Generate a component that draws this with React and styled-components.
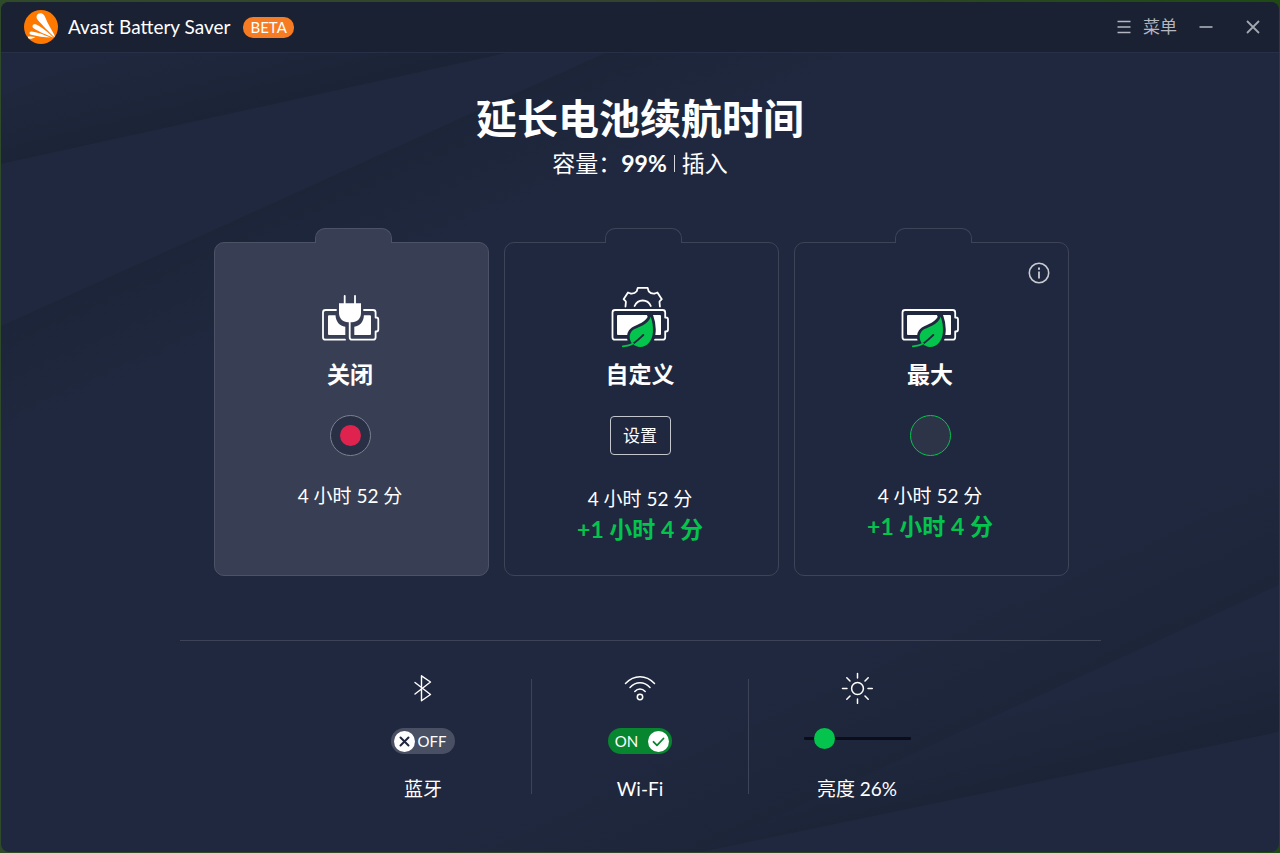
import React, { useState } from "react";
import styled, { createGlobalStyle } from "styled-components";

const color = {
  window: "#20283f",
  header: "#1a2133",
  selected: "#383f54",
  line: "#3e4458",
  green: "#04c44d",
  red: "#e0234e",
  orange: "#ff7800",
  muted: "#b4b7bf",
};

const GlobalStyle = createGlobalStyle`
  *, *::before { box-sizing: border-box; }
  body {
    margin: 0;
    background: #2c4424;
    color: #fff;
    font-family: Lato, "Noto Sans CJK SC", sans-serif;
  }
  button, input { font: inherit; color: inherit; margin: 0; }
`;

const Desktop = styled.div`
  min-height: 100vh;
  padding: 2px 1px 1px;
  display: flex;
  background: linear-gradient(90deg, #2f4a29, #33432c 50%, #1f4a14);
`;

const Window = styled.div`
  position: relative;
  isolation: isolate;
  flex: 1;
  min-width: 0;
  overflow: hidden;
  border-radius: 8px;
  background: ${color.window};
`;

const Backdrop = styled.svg`
  position: absolute;
  inset: 0;
  width: 100%;
  height: 100%;
  z-index: -1;
`;

const Header = styled.header`
  height: 51px;
  padding: 0 19px 0 23px;
  display: flex;
  align-items: center;
  background: ${color.header};
  border-bottom: 1px solid #273047;
`;

const AppName = styled.span`
  margin-left: 10px;
  font-size: 19px;
  line-height: 28px;
`;

const Badge = styled.span`
  margin-left: 13px;
  padding: 0 7px;
  border-radius: 10px;
  background: #f77b22;
  font-size: 15px;
  line-height: 21px;
`;

const HeaderActions = styled.div`
  margin-left: auto;
  display: flex;
  align-items: center;
`;

const HeaderButton = styled.button`
  display: flex;
  align-items: center;
  gap: 12px;
  padding: 0;
  margin-left: ${(p) => p.$space || 0}px;
  border: 0;
  background: none;
  color: ${color.muted};
  font-size: 17px;
  line-height: 28px;
  cursor: pointer;
`;

const Main = styled.main`
  padding: 38px 24px 48px;
  display: flex;
  flex-direction: column;
  align-items: center;
`;

const Title = styled.h1`
  margin: 0;
  font-size: 41px;
  line-height: 56px;
  font-weight: 700;
`;

const Status = styled.p`
  margin: 0;
  font-size: 23px;
  line-height: 32px;
  display: flex;
  align-items: center;
`;

const StatusDivider = styled.span`
  width: 1px;
  height: 17px;
  margin: 0 7px;
  background: #d5d7dc;
`;

const Modes = styled.div`
  margin-top: 63px;
  padding-left: 3px;
  display: flex;
  flex-wrap: wrap;
  justify-content: center;
  gap: 15px;
`;

const ModeCard = styled.section`
  position: relative;
  width: 275px;
  min-height: 334px;
  padding: 43px 3px 28px 0;
  display: flex;
  flex-direction: column;
  align-items: center;
  border: 1px solid ${(p) => (p.$selected ? "#4c5366" : color.line)};
  border-radius: 10px;
  background: ${(p) => (p.$selected ? color.selected : color.window)};

  &::before {
    content: "";
    position: absolute;
    top: -15px;
    left: 100px;
    width: 77px;
    height: 15px;
    border: 1px solid ${(p) => (p.$selected ? "#4c5366" : color.line)};
    border-bottom: 0;
    border-radius: 10px 10px 0 0;
    background: inherit;
  }
`;

const ModeName = styled.h2`
  margin: 11px 0 26px;
  font-size: 23px;
  line-height: 30px;
  font-weight: 700;
`;

const ModeRadio = styled.input`
  appearance: none;
  width: 41px;
  height: 41px;
  margin-bottom: 25px;
  display: grid;
  place-items: center;
  border: 1px solid ${(p) => (p.$tone === "green" ? color.green : "#7c8190")};
  border-radius: 50%;
  background: ${(p) => (p.$tone === "green" ? "#2d3448" : "#293045")};
  cursor: pointer;

  &:checked::before {
    content: "";
    width: 21px;
    height: 21px;
    border-radius: 50%;
    background: ${(p) => (p.$tone === "green" ? color.green : color.red)};
  }
`;

const SettingsButton = styled.button`
  width: 61px;
  height: 39px;
  margin: 1px 0 29px;
  padding: 0;
  border: 1px solid #c4c6cd;
  border-radius: 4px;
  background: none;
  font-size: 17px;
  line-height: 28px;
  cursor: pointer;
`;

const Remaining = styled.p`
  margin: 0;
  font-size: 19px;
  line-height: 30px;
`;

const Bonus = styled.p`
  margin: 0;
  font-size: 23px;
  line-height: 30px;
  font-weight: 700;
  color: ${color.green};
`;

const InfoButton = styled.button`
  position: absolute;
  top: 19px;
  right: 18px;
  display: flex;
  padding: 0;
  border: 0;
  background: none;
  cursor: pointer;
`;

const Rule = styled.hr`
  width: 100%;
  max-width: 921px;
  height: 1px;
  margin: 64px 0 31px;
  border: 0;
  background: ${color.line};
`;

const QuickControls = styled.div`
  display: flex;
  justify-content: center;
`;

const QuickItem = styled.div`
  width: 216px;
  display: flex;
  flex-direction: column;
  align-items: center;
`;

const QuickDivider = styled.div`
  width: 1px;
  height: 115px;
  margin-top: 7px;
  background: ${color.line};
`;

const QuickLabel = styled.label`
  margin-top: 21px;
  font-size: 19px;
  line-height: 28px;
`;

const SwitchBox = styled.label`
  position: relative;
  width: 64px;
  height: 26px;
  margin-top: 24px;
  padding: 0 3px;
  display: flex;
  flex-direction: ${(p) => (p.$on ? "row-reverse" : "row")};
  align-items: center;
  border-radius: 13px;
  background: ${(p) => (p.$on ? "#07862f" : "#4a5063")};
  font-size: 15px;
  line-height: 20px;
  cursor: pointer;
`;

const SwitchInput = styled.input`
  position: absolute;
  inset: 0;
  width: 100%;
  height: 100%;
  opacity: 0;
  cursor: pointer;
`;

const SwitchText = styled.span`
  flex: 1;
  padding-right: ${(p) => (p.$on ? 6 : 3)}px;
  text-align: center;
`;

const Slider = styled.input`
  appearance: none;
  width: 107px;
  height: 22px;
  margin: 23px 0 5px;
  background: none;
  cursor: pointer;

  &::-webkit-slider-runnable-track {
    height: 3px;
    border-radius: 1px;
    background: #0b0e1a;
  }
  &::-webkit-slider-thumb {
    appearance: none;
    width: 21px;
    height: 21px;
    margin-top: -9px;
    border-radius: 50%;
    background: ${color.green};
  }
`;

function Waves() {
  const fades = [
    ["w1", 250, 107, 228, 18, 0.6],
    ["w2", 220, 227, 262, 322, 0.45],
    ["w3", 1100, 664, 1052, 560, 0.4],
    ["w4", 1000, 788, 980, 710, 0.55],
  ];
  return (
    <Backdrop viewBox="0 0 1278 850" preserveAspectRatio="none" aria-hidden="true">
      <defs>
        {fades.map(([id, x1, y1, x2, y2, opacity]) => (
          <linearGradient key={id} id={id} gradientUnits="userSpaceOnUse" x1={x1} y1={y1} x2={x2} y2={y2}>
            <stop offset="0" stopColor="#182131" stopOpacity={opacity} />
            <stop offset="1" stopColor="#182131" stopOpacity="0" />
          </linearGradient>
        ))}
      </defs>
      <path d="M0 162L510 50H100L0 94z" fill="url(#w1)" />
      <path d="M0 324L606 50H900V200L0 600z" fill="url(#w2)" />
      <path d="M1278 583L700 850H400V700L1278 400z" fill="url(#w3)" />
      <path d="M1278 730L700 850L1278 583z" fill="url(#w4)" />
    </Backdrop>
  );
}

function Logo() {
  return (
    <svg width="34" height="34" viewBox="0 0 34 34" aria-hidden="true">
      <circle cx="17" cy="17" r="17" fill={color.orange} />
      <g fill="#fff">
        <path d="M30.6 27.4C26 23 17.500 14.500 13.600 9.800C10.800 6 14.200 2 18 3.600C19.600 4.300 20.500 5.600 21.200 7.300C23.500 13.200 28 20.500 30.600 25.500z" />
        <path d="M29.500 27.700C23.500 25.700 14.500 21.500 10 18.600C7 16.400 8.800 13.200 12.300 14.600C17 16.700 24.500 22.700 29.500 27.700z" />
        <path d="M26.500 27.600C20.500 27.500 13 26.200 7.300 24.800C4.700 24 4.900 21.400 7.800 21.400C14 22.100 20.500 24.900 26.500 27.600z" />
        <path d="M11.500 26.900C9.500 28 7 29 4.800 28.600C3.900 28 3.500 27 4.500 26.600C6.500 26.200 9 26.600 11.500 26.900z" />
      </g>
    </svg>
  );
}

const stroke = { fill: "none", stroke: "#fff", strokeWidth: 1.8, strokeLinecap: "round", strokeLinejoin: "round" };

function PluggedBattery() {
  return (
    <svg width="60" height="62" viewBox="0 0 60 62" aria-hidden="true">
      <g {...stroke}>
        <path d="M16 24H5.500Q3 24 3 26.500V51.200Q3 53.700 5.500 53.700H25" />
        <path d="M44 24H53Q55.600 24 55.600 26.500V31.500H56.300Q58.300 31.500 58.300 33.500V43.500Q58.300 45.500 56.300 45.500H55.600V51.200Q55.600 53.700 53 53.700H32Q29.700 53.700 29.700 51.200V35" />
        <path d="M24.700 9.800V18M35 9.800V18" />
      </g>
      <g fill="#fff">
        <path d="M9 29.300H15.500C16 36 19.500 40 25.300 40.700V49H9Q8 49 8 48V30.300Q8 29.300 9 29.300z" />
        <path d="M43.900 29.300H50Q51 29.300 51 30.300V48Q51 49 50 49H34.300V40.700C40 40 43.600 36 43.900 29.300z" />
        <path d="M19 17.300H41V27C41 32.500 37 36.300 32 36.300H28C23 36.300 19 32.500 19 27z" />
      </g>
    </svg>
  );
}

const leafPath =
  "M40.700 30.700C42.500 35.500 43.300 41 42.900 46C42.500 55.500 36.500 61 30 60.900C27 60.700 25 59.800 22.800 58.200C19.500 55 18.600 49.500 21.200 46C23.500 42.500 28 42 32.500 39.500C36.500 37.200 39.500 34.500 40.700 30.700z";

function LeafBattery({ gear }) {
  return (
    <svg width="60" height="62" viewBox="0 0 60 62" aria-hidden="true">
      {gear && (
        <g {...stroke}>
          <path d="M15.500 20.500L15.900 16Q16 15.500 15.600 15.200L13.600 13.200L18 6.500L20.500 7.500Q24.500 8 26.700 5.300L27.800 1.800H37.600L38.700 5.300Q41 8 44.900 7.500L47.400 6.500L51.800 13.200L49.800 15.200Q49.400 15.500 49.500 16L49.900 20.500" />
          <path d="M24.600 20Q27 14.500 32.700 14.500Q38.500 14.500 40.800 20" />
        </g>
      )}
      <g {...stroke}>
        <path d="M17 53.700H5Q2.500 53.700 2.500 51.200V26.500Q2.500 24 5 24H52.700Q55.200 24 55.200 26.500V31.500H56Q58 31.500 58 33.500V43.500Q58 45.500 56 45.500H55.200V51.200Q55.200 53.700 52.700 53.700H45" />
      </g>
      <path d="M8 29H50Q51 29 51 30V48Q51 49 50 49H8Q7 49 7 48V30Q7 29 8 29z" fill="#fff" />
      <path d={leafPath} fill={color.window} stroke={color.window} strokeWidth="5.500" strokeLinejoin="round" />
      <path d="M36.500 28.500H42.500L41 36z" fill={color.window} />
      <path d={leafPath} fill={color.green} />
      <path d="M20 59.800C25 57 29 53 33.300 49" fill="none" stroke={color.window} strokeWidth="2" strokeLinecap="round" />
      <path d="M12.800 60.300C17 60 20 59.500 23 57.600" fill="none" stroke={color.green} strokeWidth="1.800" strokeLinecap="round" />
    </svg>
  );
}

function InfoIcon() {
  return (
    <svg width="22" height="22" viewBox="0 0 22 22" fill="none" stroke="#c9cbd1" aria-hidden="true">
      <circle cx="11" cy="11" r="9.700" strokeWidth="1.600" />
      <path d="M11 9.500V16.500" strokeWidth="1.800" />
      <path d="M11 5.600V7.700" strokeWidth="2" />
    </svg>
  );
}

function BluetoothIcon() {
  return (
    <svg width="32" height="32" viewBox="0 0 32 32" {...stroke} strokeWidth="1.400" aria-hidden="true">
      <path d="M8 10.500L23.500 22.500L14.500 28.800V3.800L23.500 10L8 22" />
    </svg>
  );
}

function WifiIcon() {
  return (
    <svg width="32" height="32" viewBox="0 0 32 32" {...stroke} strokeWidth="1.500" aria-hidden="true">
      <path d="M1.500 11.500Q8 4.800 16 4.800T30.500 11.500" />
      <path d="M6 15.500Q10.500 10.800 16 10.800T26 15.500" />
      <path d="M10.800 19.500Q13 17 16 17T21.200 19.500" />
      <circle cx="16" cy="25" r="2.700" />
    </svg>
  );
}

function SunIcon() {
  return (
    <svg width="32" height="32" viewBox="0 0 32 32" {...stroke} strokeWidth="1.500" aria-hidden="true">
      <circle cx="16.500" cy="16.500" r="5.900" />
      <path d="M16.500 1.500V6M16.500 27V31.300M1.500 16.500H6M27 16.500H31.300M5.800 5.800L9 9M24 24L27.200 27.200M27.200 5.800L24 9M9 24L5.800 27.200" />
    </svg>
  );
}

function Switch({ id, label, on, onChange }) {
  return (
    <SwitchBox $on={on}>
      <SwitchInput id={id} type="checkbox" role="switch" aria-label={label} checked={on} onChange={onChange} />
      <svg width="21" height="21" viewBox="0 0 21 21" fill="none" strokeWidth="1.800" strokeLinecap="round" strokeLinejoin="round" aria-hidden="true">
        <circle cx="10.500" cy="10.500" r="10.500" fill="#fff" />
        {on ? (
          <path d="M5.500 10.800L9 14.300L15.500 7.500" stroke="#07862f" />
        ) : (
          <path d="M6.500 6.500L14.500 14.500M14.500 6.500L6.500 14.500" stroke={color.window} strokeWidth="2" />
        )}
      </svg>
      <SwitchText $on={on}>{on ? "ON" : "OFF"}</SwitchText>
    </SwitchBox>
  );
}

export default function App() {
  const [mode, setMode] = useState("off");
  const [bluetooth, setBluetooth] = useState(false);
  const [wifi, setWifi] = useState(true);
  const [brightness, setBrightness] = useState(26);

  return (
    <>
      <GlobalStyle />
      <Desktop>
        <Window>
          <Waves />
          <Header>
            <Logo />
            <AppName>Avast Battery Saver</AppName>
            <Badge>BETA</Badge>
            <HeaderActions>
              <HeaderButton type="button">
                <svg width="14" height="14" viewBox="0 0 14 14" stroke="currentColor" strokeWidth="1.500" aria-hidden="true">
                  <path d="M0.500 1.500H13.500M0.500 7H13.500M0.500 12.500H13.500" />
                </svg>
                菜单
              </HeaderButton>
              <HeaderButton type="button" $space={22} aria-label="最小化">
                <svg width="14" height="14" viewBox="0 0 14 14" stroke="#8f939e" strokeWidth="2" aria-hidden="true">
                  <path d="M0.500 7H13.500" />
                </svg>
              </HeaderButton>
              <HeaderButton type="button" $space={33} aria-label="关闭窗口">
                <svg width="14" height="14" viewBox="0 0 14 14" stroke="#a3a7b0" strokeWidth="1.800" aria-hidden="true">
                  <path d="M1 1L13 13M13 1L1 13" />
                </svg>
              </HeaderButton>
            </HeaderActions>
          </Header>

          <Main>
            <Title>延长电池续航时间</Title>
            <Status>
              容量：<strong>99%</strong>
              <StatusDivider />
              插入
            </Status>

            <Modes>
              <ModeCard $selected={mode === "off"}>
                <PluggedBattery />
                <ModeName id="mode-off">关闭</ModeName>
                <ModeRadio
                  type="radio"
                  name="mode"
                  aria-labelledby="mode-off"
                  checked={mode === "off"}
                  onChange={() => setMode("off")}
                />
                <Remaining>4 小时 52 分</Remaining>
              </ModeCard>
              <ModeCard>
                <LeafBattery gear />
                <ModeName>自定义</ModeName>
                <SettingsButton type="button">设置</SettingsButton>
                <Remaining>4 小时 52 分</Remaining>
                <Bonus>+1 小时 4 分</Bonus>
              </ModeCard>
              <ModeCard $selected={mode === "max"}>
                <InfoButton type="button" aria-label="信息">
                  <InfoIcon />
                </InfoButton>
                <LeafBattery />
                <ModeName id="mode-max">最大</ModeName>
                <ModeRadio
                  $tone="green"
                  type="radio"
                  name="mode"
                  aria-labelledby="mode-max"
                  checked={mode === "max"}
                  onChange={() => setMode("max")}
                />
                <Remaining>4 小时 52 分</Remaining>
                <Bonus>+1 小时 4 分</Bonus>
              </ModeCard>
            </Modes>

            <Rule />

            <QuickControls>
              <QuickItem>
                <BluetoothIcon />
                <Switch id="bluetooth" label="蓝牙" on={bluetooth} onChange={() => setBluetooth(!bluetooth)} />
                <QuickLabel htmlFor="bluetooth">蓝牙</QuickLabel>
              </QuickItem>
              <QuickDivider />
              <QuickItem>
                <WifiIcon />
                <Switch id="wifi" label="Wi-Fi" on={wifi} onChange={() => setWifi(!wifi)} />
                <QuickLabel htmlFor="wifi">Wi-Fi</QuickLabel>
              </QuickItem>
              <QuickDivider />
              <QuickItem>
                <SunIcon />
                <Slider
                  id="brightness"
                  type="range"
                  min="16"
                  max="100"
                  value={brightness}
                  onChange={(e) => setBrightness(Number(e.target.value))}
                />
                <QuickLabel htmlFor="brightness">亮度 {brightness}%</QuickLabel>
              </QuickItem>
            </QuickControls>
          </Main>
        </Window>
      </Desktop>
    </>
  );
}
